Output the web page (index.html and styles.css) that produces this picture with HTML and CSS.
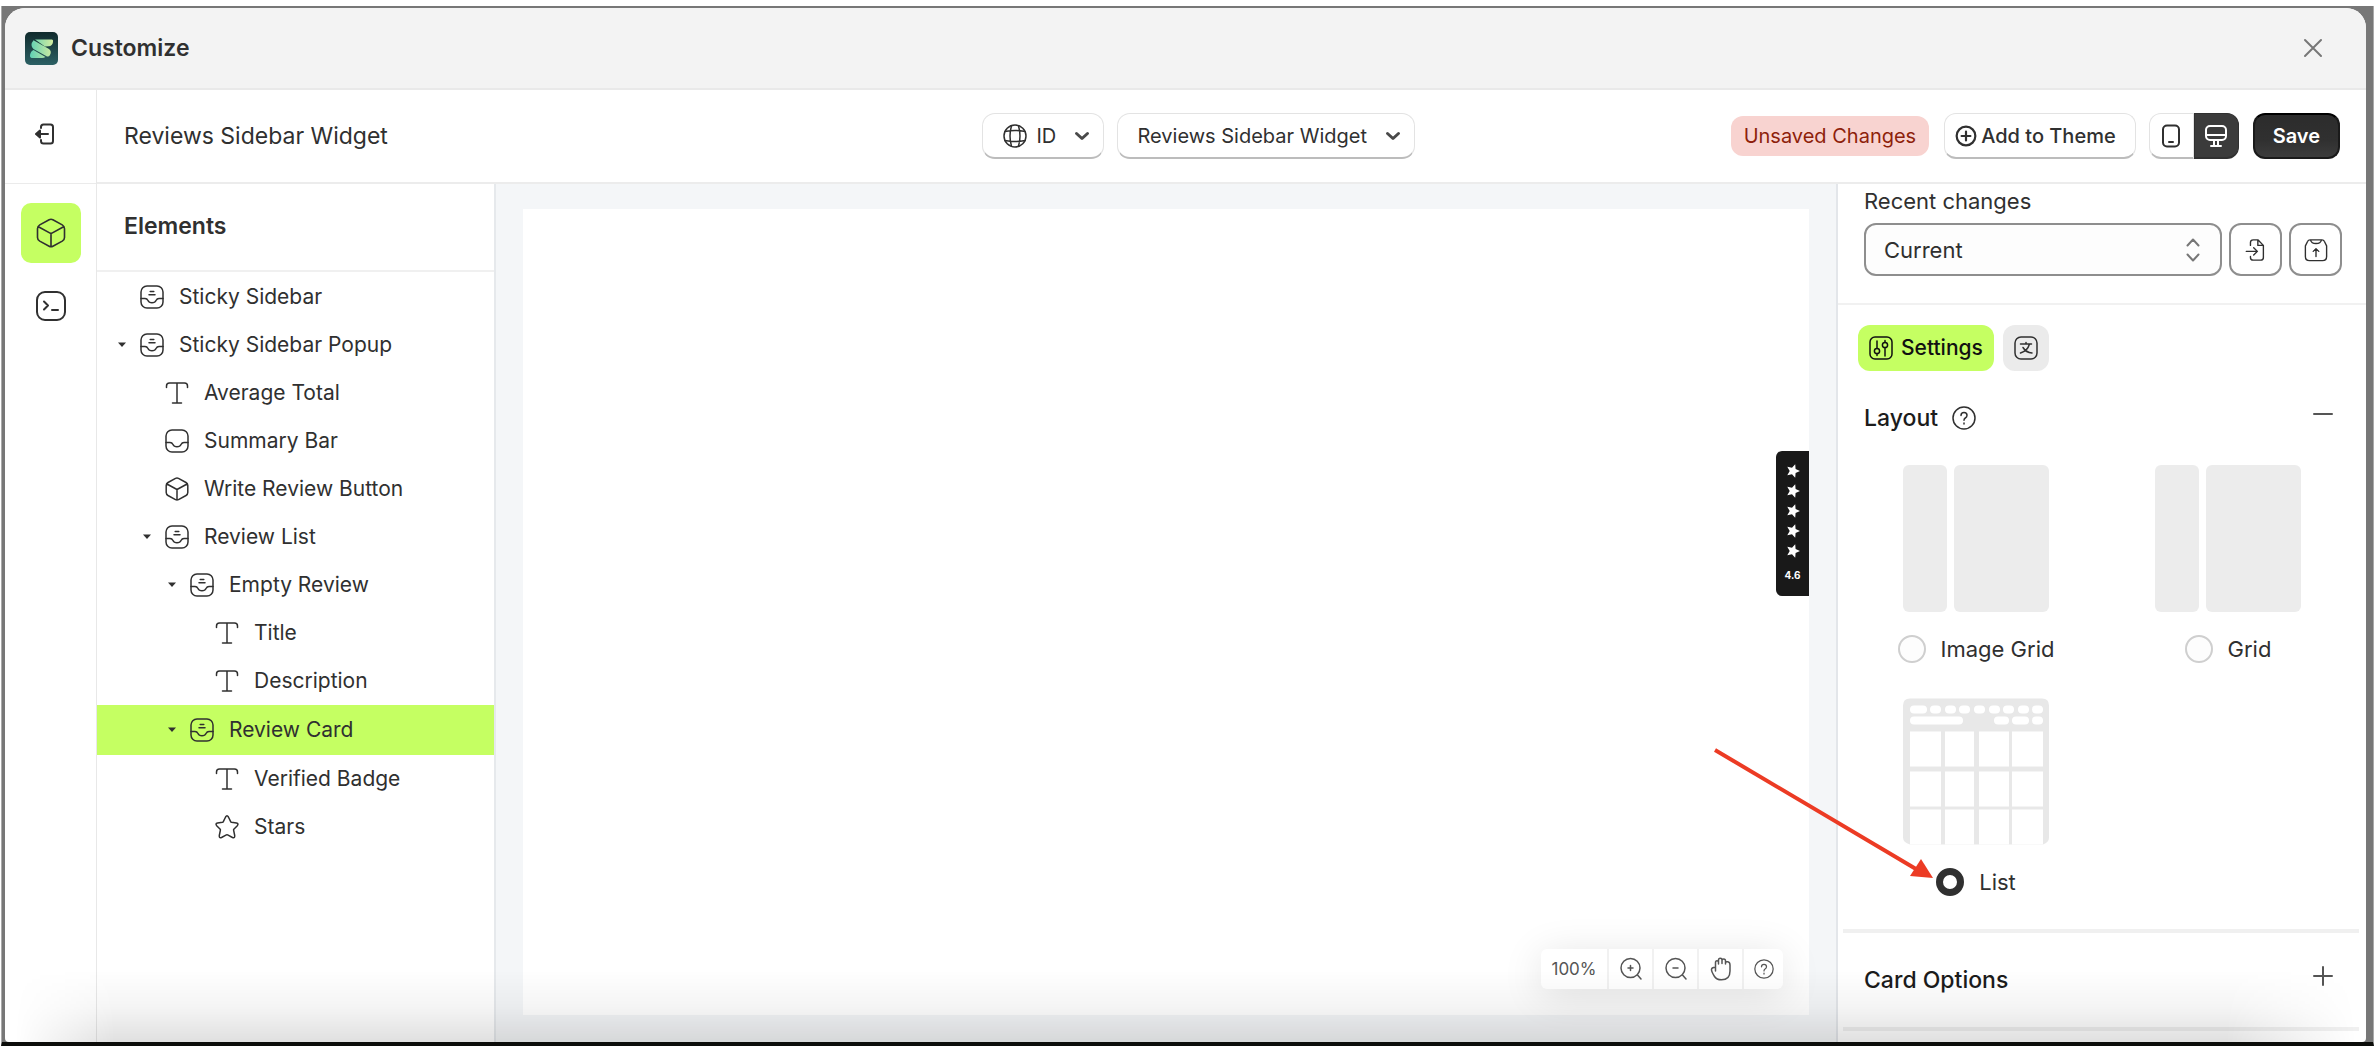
FILE: index.html
```html
<!DOCTYPE html>
<html lang="en">
<head>
<meta charset="utf-8">
<title>Customize</title>
<link rel="stylesheet" href="styles.css">
</head>
<body>
<svg class="sprite" aria-hidden="true">
  <symbol id="i-box" viewBox="0 0 24 24"><path d="M10.500 1.400 Q12 .6 13.500 1.400 L21 5.500 Q22.800 6.600 22.800 8.500 V15.500 Q22.800 17.400 21 18.500 L13.500 22.600 Q12 23.400 10.500 22.600 L3 18.500 Q1.200 17.400 1.200 15.500 V8.500 Q1.200 6.600 3 5.500 Z M1.900 7 L12 12.500 L22.100 7 M12 12.500 V23"/></symbol>
  <symbol id="i-inbox" viewBox="0 0 24 24"><rect x="1" y="1" width="22" height="22" rx="6"/><path d="M1 13.500 H5 Q7 13.500 8 15.500 Q9 17.800 12 17.800 Q15 17.800 16 15.500 Q17 13.500 19 13.500 H23"/></symbol>
  <symbol id="i-tray" viewBox="0 0 24 24"><use href="#i-inbox"/><path d="M10.200 6.500 H13.800 M9 9.800 H15"/></symbol>
  <symbol id="i-text" viewBox="0 0 24 24"><path d="M1.500 6.500 V5 Q1.500 2 4.500 2 H19.500 Q22.500 2 22.500 5 V6.500 M12 2 V22 M7.500 22 H16.500"/></symbol>
  <symbol id="i-star" viewBox="0 0 24 24"><path d="M10.600 2 Q12 -.4 13.400 2 L15.800 6.800 Q16 7.200 16.500 7.300 L21.500 8.100 Q24 8.700 22.300 10.700 L18.800 14.200 Q18.500 14.600 18.600 15.100 L19.700 20.500 Q20 23.500 17.500 22.500 L12.600 19.900 Q12 19.600 11.400 19.900 L6.500 22.500 Q4 23.500 4.300 20.500 L5.400 15.100 Q5.500 14.600 5.200 14.200 L1.700 10.700 Q0 8.700 2.500 8.100 L7.500 7.300 Q8 7.200 8.200 6.800 Z"/></symbol>
  <symbol id="i-caret" viewBox="0 0 24 24"><path d="M8 9.500 H16 L12 14 Z" fill="currentColor"/></symbol>
  <symbol id="i-chevron" viewBox="0 0 16 16"><path d="M2.500 5.500 L8 10.500 L13.500 5.500"/></symbol>
  <symbol id="i-help" viewBox="0 0 24 24"><circle cx="12" cy="12" r="11"/><path d="M9 9.400 Q9 6.500 12 6.500 Q15 6.500 15 9.300 Q15 11 13.300 12 Q12 12.800 12 14.300 M12 17 V18"/></symbol>
</svg>

<div class="frame">
<div class="dialog">
  <header class="titlebar">
    <svg class="logo" viewBox="0 0 33 33" aria-hidden="true">
      <defs>
        <linearGradient id="lg-bg" x1="0" y1="0" x2="0" y2="1"><stop offset="0" stop-color="#102a2c"/><stop offset="1" stop-color="#2c6064"/></linearGradient>
        <linearGradient id="lg-s" x1="0" y1="0" x2="1" y2="0"><stop offset="0" stop-color="#5fd0b4"/><stop offset="1" stop-color="#d3eda0"/></linearGradient>
      </defs>
      <rect width="33" height="33" rx="5" fill="url(#lg-bg)"/>
      <path fill="url(#lg-s)" d="M10 7.500 H27 Q28.500 7.800 28 10 Q27.500 14 23.500 14.300 L20 14.500 Z M8.500 8.200 L24 17 Q27 19.500 25 23 Q24 25 22 24.500 L8.500 17 Q4.500 13 8.500 8.200 Z M8.500 18 L20.500 25 Q19 26 17 26 H6.500 Q4.500 25.500 5 23 Q5.800 19 8.500 18 Z"/>
    </svg>
    <h1>Customize</h1>
    <button class="plain close" aria-label="Close"><svg class="ico" viewBox="0 0 20 20"><path d="M2 2 L18 18 M18 2 L2 18"/></svg></button>
  </header>

  <div class="editor">
    <nav class="rail" aria-label="Editor sections">
      <div class="rail-exit">
        <button class="plain" aria-label="Exit"><svg class="ico exit" viewBox="0 0 20 22"><path d="M6 5 V4 Q6 1.500 8.500 1.500 H15.500 Q18 1.500 18 4 V18 Q18 20.500 15.500 20.500 H8.500 Q6 20.500 6 18 V17 M13 11 H2"/><path d="M5 7.500 L1 11 L5 14.500 Z" fill="currentColor"/></svg></button>
      </div>
      <button class="plain rail-btn active" aria-label="Elements"><svg class="ico"><use href="#i-box"/></svg></button>
      <button class="plain rail-btn" aria-label="Code"><svg class="ico" viewBox="0 0 30 30"><rect x="1" y="1" width="28" height="28" rx="8"/><path d="M8 10.500 L12 14.500 L8 18.500 M16 19 H22"/></svg></button>
    </nav>

    <div class="main">
      <div class="topbar">
        <h2 class="widget-name">Reviews Sidebar Widget</h2>
        <div class="pickers">
          <span class="picker picker-lang">
            <svg class="ico globe" viewBox="0 0 24 24"><circle cx="12" cy="12" r="11"/><path d="M2 7.500 Q12 5.500 22 7.500 M2 16.500 Q12 18.500 22 16.500 M8.500 1.800 Q5.500 12 8.500 22.200 M15.500 1.800 Q18.500 12 15.500 22.200"/></svg>
            <select aria-label="Language"><option>ID</option></select>
            <svg class="ico chev"><use href="#i-chevron"/></svg>
          </span>
          <span class="picker">
            <select aria-label="Widget"><option>Reviews Sidebar Widget</option></select>
            <svg class="ico chev"><use href="#i-chevron"/></svg>
          </span>
        </div>
        <div class="actions">
          <span class="unsaved">Unsaved Changes</span>
          <button class="btn add"><svg class="ico" viewBox="0 0 20 20"><circle cx="10" cy="10" r="8.500"/><path d="M10 6 V14 M6 10 H14"/></svg>Add to Theme</button>
          <div class="devices">
            <button aria-label="Mobile"><svg class="ico" viewBox="0 0 24 24"><rect x="4" y="1.500" width="16" height="21" rx="4"/><path d="M10 18 H14"/></svg></button>
            <button class="on" aria-label="Desktop"><svg class="ico" viewBox="0 0 24 24"><rect x="2" y="2" width="20" height="14" rx="4"/><path d="M2 11 H22 M10 16 V21 M14 16 V21 M7 22 H17"/></svg></button>
          </div>
          <button class="btn save">Save</button>
        </div>
      </div>

      <div class="workspace">
        <aside class="elements">
          <h3>Elements</h3>
          <ul class="tree">
            <li><button class="node"><span class="slot"></span><svg class="ico"><use href="#i-tray"/></svg>Sticky Sidebar</button></li>
            <li><button class="node"><svg class="slot"><use href="#i-caret"/></svg><svg class="ico"><use href="#i-tray"/></svg>Sticky Sidebar Popup</button></li>
            <li><button class="node l1"><span class="slot"></span><svg class="ico"><use href="#i-text"/></svg>Average Total</button></li>
            <li><button class="node l1"><span class="slot"></span><svg class="ico"><use href="#i-inbox"/></svg>Summary Bar</button></li>
            <li><button class="node l1"><span class="slot"></span><svg class="ico"><use href="#i-box"/></svg>Write Review Button</button></li>
            <li><button class="node l1"><svg class="slot"><use href="#i-caret"/></svg><svg class="ico"><use href="#i-tray"/></svg>Review List</button></li>
            <li><button class="node l2"><svg class="slot"><use href="#i-caret"/></svg><svg class="ico"><use href="#i-tray"/></svg>Empty Review</button></li>
            <li><button class="node l3"><span class="slot"></span><svg class="ico"><use href="#i-text"/></svg>Title</button></li>
            <li><button class="node l3"><span class="slot"></span><svg class="ico"><use href="#i-text"/></svg>Description</button></li>
            <li><button class="node l2 selected"><svg class="slot"><use href="#i-caret"/></svg><svg class="ico"><use href="#i-tray"/></svg>Review Card</button></li>
            <li><button class="node l3"><span class="slot"></span><svg class="ico"><use href="#i-text"/></svg>Verified Badge</button></li>
            <li><button class="node l3"><span class="slot"></span><svg class="ico"><use href="#i-star"/></svg>Stars</button></li>
          </ul>
        </aside>

        <main class="canvas">
          <div class="page">
            <div class="review-tab">
              <svg viewBox="0 0 14 94" aria-label="5 stars"><defs><path id="s" d="M14 7 L9.600 9 L9.200 13.700 L6 10.200 L1.300 11.200 L3.700 7 L1.300 2.800 L6 3.800 L9.200 .3 L9.600 5 Z"/></defs><use href="#s"/><use href="#s" y="20"/><use href="#s" y="40"/><use href="#s" y="60"/><use href="#s" y="80"/></svg>
              <span>4.6</span>
            </div>
            <div class="zoombar">
              <span class="zoom-level">100%</span>
              <button aria-label="Zoom in"><svg class="ico" viewBox="0 0 24 24"><circle cx="11.500" cy="11" r="9.500"/><path d="M18.500 18 L22 22 M11.500 8.500 V13.500 M9 11 H14"/></svg></button>
              <button aria-label="Zoom out"><svg class="ico" viewBox="0 0 24 24"><circle cx="11.500" cy="11" r="9.500"/><path d="M18.500 18 L22 22 M9 11 H14"/></svg></button>
              <button aria-label="Pan"><svg class="ico" viewBox="0 0 24 24"><path d="M6.500 14 V5.500 Q6.500 3.800 8 3.800 Q9.500 3.800 9.500 5.500 V3 Q9.500 1.300 11.200 1.300 Q13 1.300 13 3 V3.500 Q13 2 14.700 2 Q16.500 2 16.500 4 V5.500 Q17 4.500 18.800 4.800 Q21 5.200 21 8 V14 Q21 22.800 12.500 22.800 Q7.500 22.800 5.500 19.500 Q2.500 14.800 2.500 12.500 Q2.500 10.500 6.500 10.300 M9.500 5.500 V7 M13 3.500 V6.500 M16.500 5.500 V7"/></svg></button>
              <button aria-label="Help"><svg class="ico small"><use href="#i-help"/></svg></button>
            </div>
          </div>
        </main>

        <aside class="panel">
          <section class="recent">
            <label for="recent">Recent changes</label>
            <div class="recent-row">
              <span class="version">
                <select id="recent"><option>Current</option></select>
                <svg class="ico" viewBox="0 0 16 26"><path d="M2.500 8.500 L8 2.500 L13.500 8.500 M2.500 17.500 L8 23.500 L13.500 17.500"/></svg>
              </span>
              <button class="square" aria-label="Import"><svg class="ico" viewBox="0 0 24 26"><path d="M6 8 V5 Q6 2 9 2 H14 L20 8 V21 Q20 24 17 24 H9 Q6 24 6 21 V20 M14 2 V8 H20 M1.500 14.500 H13 M9.500 10.500 L13.500 14.500 L9.500 18.500"/></svg></button>
              <button class="square" aria-label="Export"><svg class="ico" viewBox="0 0 26 26"><path d="M1.500 8.500 L4 3.500 Q4.700 2 6.500 2 H19.500 Q21.300 2 22 3.500 L24.500 8.500 V20 Q24.500 24.500 20 24.500 H6 Q1.500 24.500 1.500 20 Z M7 2 Q8 6 13 6 Q18 6 19 2 M13 20 V11.500 M10 14.500 L13 11.500 L16 14.500"/></svg></button>
            </div>
          </section>

          <div class="tabs">
            <button class="tab on"><svg class="ico" viewBox="0 0 24 24"><rect x="1" y="1" width="22" height="22" rx="5"/><path d="M8 5 V12 M8 18 V19.500 M16 12 V20 M16 4.500 V6"/><circle cx="8" cy="15" r="2.600"/><circle cx="16" cy="9" r="2.600"/></svg>Settings</button>
            <button class="tab" aria-label="Translations"><svg class="ico" viewBox="0 0 24 24"><rect x="1" y="1" width="22" height="22" rx="6"/><path d="M6.500 8 H17.500 M12 8 V6.500 M15.500 8 Q13.500 15 6.500 17 M9 11.500 Q12 16.500 18 17"/></svg></button>
          </div>

          <section>
            <div class="section-head layout-head">
              <h3>Layout</h3>
              <svg class="ico"><use href="#i-help"/></svg>
              <button class="plain toggle" aria-label="Collapse Layout"><svg class="ico" viewBox="0 0 20 20"><path d="M1 10 H19"/></svg></button>
            </div>
            <div class="layouts">
              <label class="choice"><span class="thumb"><i></i><i></i></span><span class="pick"><input type="radio" name="layout">Image Grid</span></label>
              <label class="choice"><span class="thumb"><i></i><i></i></span><span class="pick"><input type="radio" name="layout">Grid</span></label>
              <label class="choice">
                <svg class="thumb" viewBox="0 0 146 146" aria-hidden="true">
                  <path fill="#e8e8e8" d="M7 0 H139 Q146 0 146 7 V139 Q146 144 140 146 V110 H7 V146 Q0 144 0 139 V7 Q0 0 7 0 Z M7 110 H140 V146 H7 Z"/>
                  <g fill="#fff"><rect x="7" y="7" width="17" height="8" rx="4"/><rect x="27" y="7" width="11" height="8" rx="4"/><rect x="42" y="7" width="11" height="8" rx="4"/><rect x="56" y="7" width="11" height="8" rx="4"/><rect x="71" y="7" width="11" height="8" rx="4"/><rect x="86" y="7" width="11" height="8" rx="4"/><rect x="100" y="7" width="11" height="8" rx="4"/><rect x="115" y="7" width="11" height="8" rx="4"/><rect x="129" y="7" width="11" height="8" rx="4"/>
                  <rect x="7" y="18" width="53" height="8" rx="4"/><rect x="91" y="18" width="15" height="8" rx="4"/><rect x="109" y="18" width="17" height="8" rx="4"/><rect x="129" y="18" width="11" height="8" rx="4"/>
                  <path d="M7 33 h31 v35 h-31z M42 33 h29 v35 h-29z M76 33 h30 v35 h-30z M109 33 h31 v35 h-31z M7 73 h31 v35 h-31z M42 73 h29 v35 h-29z M76 73 h30 v35 h-30z M109 73 h31 v35 h-31z M7 111 h31 v35 h-31z M42 111 h29 v35 h-29z M76 111 h30 v35 h-30z M109 111 h31 v35 h-31z"/></g>
                </svg>
                <span class="pick"><input type="radio" name="layout" checked>List</span>
              </label>
            </div>
          </section>

          <section class="card-options">
            <div class="section-head">
              <h3>Card Options</h3>
              <button class="plain toggle" aria-label="Expand Card Options"><svg class="ico" viewBox="0 0 20 20"><path d="M1 10 H19 M10 1 V19"/></svg></button>
            </div>
          </section>
        </aside>
      </div>
    </div>
  </div>
</div>
</div>

<svg class="pointer" viewBox="0 0 220 134" aria-hidden="true"><path d="M2 3 L203 122" fill="none" stroke="#ec3b24" stroke-width="4"/><path d="M220 131 L197 129 L208 112 Z" fill="#ec3b24"/></svg>
</body>
</html>
```
FILE: styles.css
```css
* { box-sizing: border-box; }

body {
  margin: 0;
  height: 100vh;
  padding: 6px 0 0 1px;
  display: flex;
  flex-direction: column;
  background: #fff;
  color: #303030;
  font: 20px/28px Inter, "Liberation Sans", sans-serif;
}

h1, h2, h3, ul { margin: 0; padding: 0; }
ul { list-style: none; }
button, select, input { font: inherit; color: inherit; margin: 0; }
button { cursor: pointer; }
.sprite { position: absolute; width: 0; height: 0; }
.plain { border: 0; background: none; padding: 0; display: flex; }

.ico {
  width: 24px;
  height: 24px;
  flex: none;
  fill: none;
  stroke: currentColor;
  stroke-width: 1.5;
  stroke-linecap: round;
  stroke-linejoin: round;
}

/* Window frame */
.frame {
  flex: 1;
  min-height: 0;
  display: flex;
  padding: 2px 7px 0 3px;
  background: #777;
  border: 1px solid #999;
  border-width: 0 1px 4px;
  border-color: #0c0d0a #aaa;
}
.dialog {
  position: relative;
  flex: 1;
  min-width: 0;
  display: flex;
  flex-direction: column;
  background: #fff;
  border-radius: 20px 20px 4px 4px;
  overflow: hidden;
}
.dialog::after {
  content: "";
  position: absolute;
  inset: auto 0 0 0;
  height: 72px;
  pointer-events: none;
  background: linear-gradient(to bottom, rgba(0, 0, 0, 0), rgba(0, 0, 0, .04) 50%, rgba(0, 0, 0, .12));
  mask-image: linear-gradient(to right, transparent 10px, #000 110px, #000 calc(100% - 140px), transparent calc(100% - 10px));
}

.titlebar {
  flex: none;
  height: 82px;
  display: flex;
  align-items: center;
  padding: 0 43px 0 20px;
  background: #f3f3f3;
  border-bottom: 2px solid #e9e9e9;
}
.logo { width: 33px; height: 33px; margin-right: 13px; }
h1 { flex: 1; font-size: 23px; font-weight: 600; }
.close { color: #777; }
.close .ico { width: 20px; height: 20px; stroke-width: 2; }

.editor { flex: 1; min-height: 0; display: flex; }

/* Left rail */
.rail {
  width: 92px;
  flex: none;
  border-right: 1px solid #e8e8e8;
  display: flex;
  flex-direction: column;
  align-items: center;
}
.rail-exit {
  align-self: stretch;
  height: 94px;
  padding: 33px 0 0 30px;
  border-bottom: 1px solid #ebebeb;
  margin-bottom: 19px;
}
.ico.exit { width: 20px; height: 22px; stroke-width: 2; }
.rail-btn {
  width: 60px;
  height: 60px;
  align-items: center;
  justify-content: center;
  border-radius: 10px;
  margin-bottom: 13px;
}
.rail-btn.active { background: #c5ff62; }
.rail-btn .ico { width: 30px; height: 30px; stroke-width: 2; }
.rail-btn.active .ico { stroke-width: 1.3; }

.main { flex: 1; min-width: 0; display: flex; flex-direction: column; }

/* Top bar */
.topbar {
  flex: none;
  height: 94px;
  display: flex;
  align-items: center;
  padding: 0 26px 0 27px;
  border-bottom: 2px solid #ececec;
}
.widget-name { flex: 13 1 0; font-size: 23px; font-weight: 400; }
.pickers { display: flex; gap: 13px; }
.picker { position: relative; display: flex; align-items: center; }
.picker select {
  appearance: none;
  height: 46px;
  padding: 0 47px 0 19px;
  background: #fff;
  border: 1px solid #e3e3e3;
  border-bottom: 2px solid #bcbcbc;
  border-radius: 13px;
}
.picker-lang select { padding-left: 53px; }
.picker .globe { position: absolute; left: 21px; }
.picker .chev { position: absolute; right: 14px; width: 16px; height: 16px; color: #4a4a4a; stroke-width: 3; }

.actions { flex: 14 1 0; display: flex; align-items: center; justify-content: flex-end; }
.unsaved {
  height: 40px;
  line-height: 40px;
  padding: 0 13px;
  margin-right: 15px;
  border-radius: 12px;
  background: #f8d3d0;
  color: #8e1f0b;
}
.btn {
  height: 46px;
  display: flex;
  align-items: center;
  border: 1px solid #e3e3e3;
  border-bottom: 2px solid #bcbcbc;
  border-radius: 12px;
  background: #fff;
  font-weight: 500;
  white-space: nowrap;
}
.add { padding: 0 19px 0 10px; gap: 4px; margin-right: 13px; }
.add .ico { width: 22px; height: 22px; stroke-width: 2; }
.devices { display: flex; margin-right: 14px; }
.devices button {
  width: 45px;
  height: 46px;
  display: flex;
  align-items: center;
  justify-content: center;
  padding: 0;
  background: #fff;
  border: 1px solid #e3e3e3;
  border-bottom: 2px solid #bcbcbc;
  border-radius: 12px 0 0 12px;
}
.devices .ico { stroke-width: 2; }
.devices .on { background: #3b3b3b; color: #fff; border-color: #303030; border-radius: 0 12px 12px 0; }
.save {
  padding: 0 18px;
  border: 2px solid #1a1a1a;
  border-top-color: #000;
  background: linear-gradient(#2c2c2c, #303030 60%, #3c3c3c);
  color: #fff;
  font-weight: 600;
}

.workspace { flex: 1; min-height: 0; display: flex; }

/* Element tree */
.elements { width: 399px; flex: none; border-right: 2px solid #e6e9ec; }
.elements h3 {
  height: 88px;
  line-height: 84px;
  padding-left: 27px;
  border-bottom: 2px solid #f0f0f0;
  font-size: 23px;
  font-weight: 600;
}
.tree { padding-top: 1px; }
.node {
  width: 100%;
  height: 48px;
  display: flex;
  align-items: center;
  border: 0;
  background: none;
  padding: 0 0 0 13px;
  text-align: left;
  font-size: 21px;
}
.node .slot { width: 24px; height: 24px; margin-right: 6px; flex: none; }
.node .ico { margin-right: 15px; }
.l1 { padding-left: 38px; }
.l2 { padding-left: 63px; }
.l3 { padding-left: 88px; }
.node.selected { height: 50px; background: #c5ff62; }

/* Preview canvas */
.canvas { flex: 1; min-width: 0; display: flex; padding: 25px 27px 27px; background: #f4f6f8; }
.page { position: relative; flex: 1; background: #fff; }
.review-tab {
  position: absolute;
  right: 0;
  top: 242px;
  width: 33px;
  height: 145px;
  padding-top: 13px;
  display: flex;
  flex-direction: column;
  align-items: center;
  gap: 5px;
  background: #191919;
  border-radius: 6px 0 0 6px;
  color: #fff;
  font-size: 10px;
  font-weight: 700;
}
.review-tab svg { width: 14px; height: 94px; flex: none; fill: #fff; }
.review-tab span { line-height: 24px; }
.zoombar {
  position: absolute;
  right: 26px;
  bottom: 26px;
  height: 40px;
  display: flex;
  align-items: center;
  background: #fff;
  border-radius: 6px;
  box-shadow: 0 6px 40px rgba(0, 0, 0, .12);
  color: #555;
}
.zoom-level { width: 66px; text-align: center; font-size: 17px; }
.zoombar button {
  width: 45px;
  height: 40px;
  padding: 0;
  border: 0;
  border-left: 2px solid #f1f1f1;
  background: none;
  display: flex;
  align-items: center;
  justify-content: center;
}
.zoombar button:last-child { width: 41px; }
.ico.small { width: 20px; height: 20px; }

/* Settings panel */
.panel { width: 530px; flex: none; border-left: 2px solid #e3e6ea; overflow: hidden; font-size: 22px; }
.recent { padding: 3px 24px 27px 26px; border-bottom: 2px solid #f1f1f1; }
.recent label { display: block; margin-bottom: 8px; }
.recent-row { display: flex; gap: 7px; }
.version { position: relative; flex: 1; display: flex; align-items: center; }
.version select {
  appearance: none;
  width: 100%;
  height: 53px;
  padding: 0 18px;
  border: 2px solid #8e8e8e;
  border-radius: 12px;
  background: #fdfdfd;
}
.version .ico { position: absolute; right: 21px; width: 16px; height: 26px; color: #777; stroke-width: 2; }
.square {
  width: 53px;
  height: 53px;
  display: flex;
  align-items: center;
  justify-content: center;
  padding: 0;
  border: 2px solid #8e8e8e;
  border-radius: 12px;
  background: #fff;
}
.tabs { display: flex; gap: 9px; padding: 20px 20px 0; }
.tab {
  height: 46px;
  display: flex;
  align-items: center;
  gap: 8px;
  padding: 0 11px;
  border: 0;
  border-radius: 12px;
  background: #ebebeb;
  font-size: 21px;
  font-weight: 500;
}
.tab.on { background: #c5ff62; color: #111; }
.section-head { display: flex; align-items: center; padding: 0 33px 0 26px; }
.section-head h3 { font-size: 23px; font-weight: 500; color: #1c1c1c; }
.section-head > .ico { margin-left: 14px; }
.layout-head { height: 94px; }
.toggle { margin: 0 0 8px auto; color: #555; }
.toggle .ico { width: 20px; height: 20px; stroke-width: 2; }
.layouts { display: grid; grid-template-columns: 1fr 1fr; row-gap: 35px; padding: 0 12px; }
.choice { display: flex; flex-direction: column; align-items: center; gap: 23px; }
.thumb { width: 146px; height: 147px; display: flex; gap: 7px; }
.thumb i { flex: 44 1 0; border-radius: 6px; background: #ececec; }
.thumb i + i { flex-grow: 95; }
.pick { display: flex; align-items: center; gap: 15px; }
.pick input {
  appearance: none;
  width: 28px;
  height: 28px;
  border: 2px solid #cfcfcf;
  border-radius: 50%;
  background: #fdfdfd;
}
.pick input:checked { border: 7px solid #303030; background: #fff; }
.card-options { margin: 33px 7px 0 5px; border: solid #f0f0f0; border-width: 4px 0; }
.card-options .section-head { height: 94px; padding: 0 26px 0 21px; }

/* Call-out arrow */
.pointer { position: absolute; left: 1713px; top: 747px; width: 220px; height: 134px; pointer-events: none; }
```
